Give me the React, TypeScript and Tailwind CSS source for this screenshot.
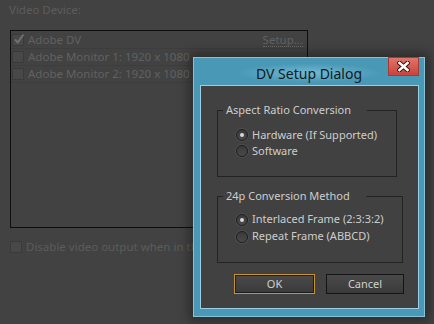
import React from "react";

function Radio({ checked }: { checked?: boolean }) {
  return (
    <span className="relative flex h-[12px] w-[12px] shrink-0 items-center justify-center rounded-full border border-[#1f1f1f] bg-[linear-gradient(#3a3a3a,#4a4a4a)] shadow-[0_0_0_1px_rgba(120,120,120,0.25)]">
      {checked && <span className="h-[4px] w-[4px] rounded-full bg-[#d8d8d8]" />}
    </span>
  );
}

function DimCheck({ checked }: { checked?: boolean }) {
  return (
    <span className="relative flex h-[12px] w-[12px] shrink-0 items-center justify-center border border-[#3a3a3a] bg-[#484848]">
      {checked && (
        <svg width="12" height="12" viewBox="0 0 12 12" className="absolute left-[0px] top-[-2px]">
          <path d="M2 6.5 L4.8 9.5 L10.5 1.5" stroke="#707070" strokeWidth="2" fill="none" />
        </svg>
      )}
    </span>
  );
}

export default function App() {
  return (
    <div className="relative h-[324px] w-[434px] overflow-hidden bg-[#424242] font-['Noto_Sans',sans-serif] text-[11.5px]">
      <div className="pl-[9px] pt-[1px] leading-[18px] text-[#5c5c5c]">Video Device:</div>
      <div className="ml-[10px] mt-[11px] h-[198px] w-[298px] border border-[#0e0e0e] pt-[1px]">
        <div className="flex h-[17px] items-center border-b border-[#3d3d3d] pl-[1px] pr-[4px]">
          <DimCheck checked />
          <span className="ml-[4px] text-[#616161]">Adobe DV</span>
          <span className="ml-auto border-b border-dotted border-[#6a6a6a] leading-[13px] text-[#616161]">Setup...</span>
        </div>
        <div className="flex h-[17px] items-center border-b border-[#3d3d3d] pl-[1px]">
          <DimCheck />
          <span className="ml-[4px] text-[#616161]">Adobe Monitor 1: 1920 x 1080</span>
        </div>
        <div className="flex h-[17px] items-center border-b border-[#3d3d3d] pl-[1px]">
          <DimCheck />
          <span className="ml-[4px] text-[#616161]">Adobe Monitor 2: 1920 x 1080</span>
        </div>
      </div>
      <div className="ml-[10px] mt-[10px] flex items-center">
        <DimCheck />
        <span className="ml-[4px] text-[#5c5c5c]">Disable video output when in the background</span>
      </div>

      <div className="absolute left-[193px] top-[57px] flex h-[260px] w-[232px] flex-col border border-[#86c3d8] bg-[#4898b6] shadow-[0_0_10px_4px_rgba(0,0,0,0.35)]">
        <div className="relative flex h-[27px] items-center justify-center bg-[radial-gradient(ellipse_at_50%_55%,rgba(150,210,230,0.55),rgba(150,210,230,0)_45%)]">
          <span className="mt-[3px] text-[14px] text-[#111a1f]">DV Setup Dialog</span>
          <div className="absolute right-[5px] top-[-1px] flex h-[19px] w-[31px] items-center justify-center border border-[#a33a33] bg-[linear-gradient(#e0756b,#c9433a)]">
            <svg width="13" height="11" viewBox="0 0 13 11">
              <path d="M2.5 2 L10.5 9 M10.5 2 L2.5 9" stroke="#3a1210" strokeWidth="4.5" strokeLinecap="square" />
              <path d="M2.5 2 L10.5 9 M10.5 2 L2.5 9" stroke="#ffffff" strokeWidth="2.6" strokeLinecap="square" />
            </svg>
          </div>
        </div>
        <div className="ml-[6px] mr-[5px] h-[224px] border border-[#9ad0e2] bg-[#414141] text-[11px] text-[#cdcdcd]">
          <fieldset className="ml-[16px] mt-[17px] h-[74px] w-[180px] border border-[#232323] p-0">
            <legend className="ml-[5px] whitespace-nowrap pl-[3px] pr-[16px] leading-[14px]">Aspect Ratio Conversion</legend>
            <div className="pl-[18px] pt-[10px]">
              <div className="flex h-[16px] items-center gap-[4px]">
                <Radio checked />
                <span>Hardware (If Supported)</span>
              </div>
              <div className="flex h-[16px] items-center gap-[4px]">
                <Radio />
                <span>Software</span>
              </div>
            </div>
          </fieldset>
          <fieldset className="ml-[16px] mt-[12px] h-[74px] w-[186px] border border-[#232323] p-0">
            <legend className="ml-[5px] whitespace-nowrap pl-[3px] pr-[16px] leading-[14px]">24p Conversion Method</legend>
            <div className="pl-[18px] pt-[8px]">
              <div className="flex h-[17px] items-center gap-[4px]">
                <Radio checked />
                <span>Interlaced Frame (2:3:3:2)</span>
              </div>
              <div className="flex h-[17px] items-center gap-[4px]">
                <Radio />
                <span>Repeat Frame (ABBCD)</span>
              </div>
            </div>
          </fieldset>
          <div className="ml-[33px] mt-[11px] flex gap-[11px]">
            <button className="flex h-[20px] w-[81px] items-center justify-center border border-[#c8952c] bg-[linear-gradient(#4a4a4a,#3a3a3a)] text-[#d0d0d0] shadow-[inset_0_0_0_1px_#1c1c1c]">
              OK
            </button>
            <button className="flex h-[20px] w-[78px] items-center justify-center border border-[#151515] bg-[linear-gradient(#4a4a4a,#3a3a3a)] text-[#d0d0d0]">
              Cancel
            </button>
          </div>
        </div>
      </div>
    </div>
  );
}
